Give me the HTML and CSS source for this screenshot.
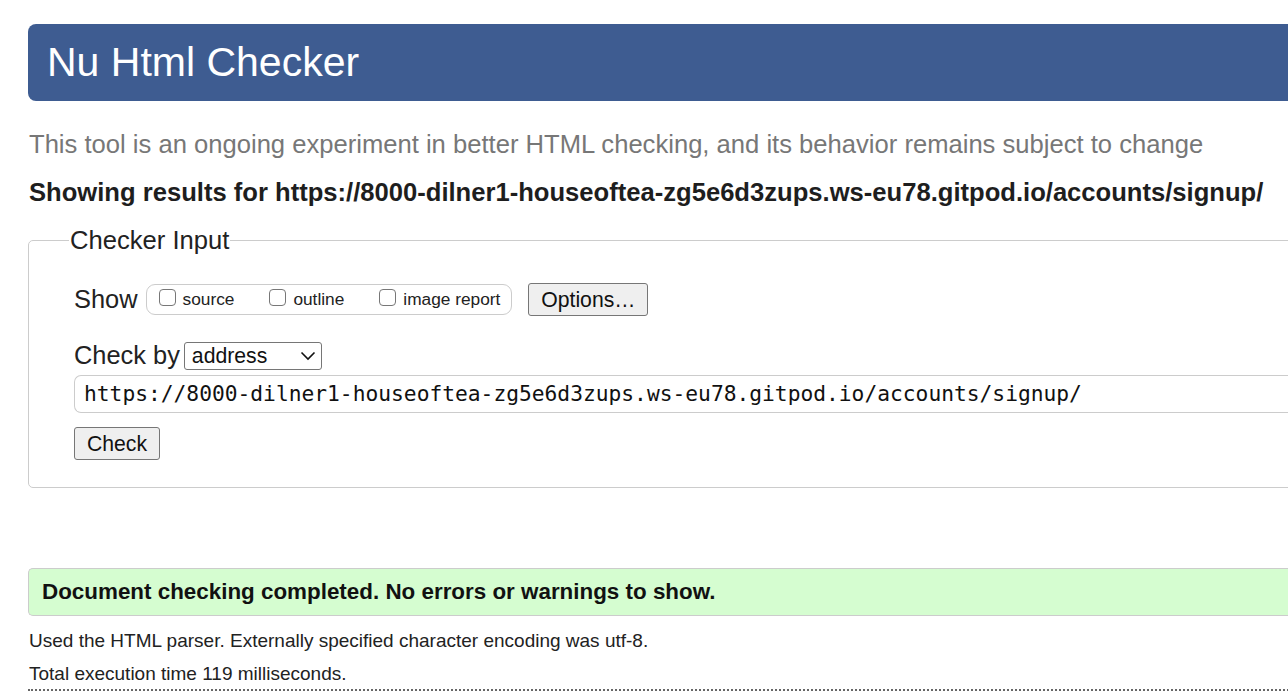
FILE: index.html
```html
<!DOCTYPE html>
<html lang="en">
<head>
<meta charset="utf-8">
<title>Nu Html Checker</title>
<link rel="stylesheet" href="styles.css">
</head>
<body>
<div class="page">
  <h1 class="banner">Nu Html Checker</h1>
  <p class="tagline">This tool is an ongoing experiment in better HTML checking, and its behavior remains subject to change</p>
  <p class="showing">Showing results for https://8000-dilner1-houseoftea-zg5e6d3zups.ws-eu78.gitpod.io/accounts/signup/</p>
  <fieldset class="input-box">
    <legend class="legend">Checker Input</legend>
    <div class="inner">
      <div class="row show-row">
        <span class="row-label">Show</span>
        <span class="opts">
          <label class="opt"><span class="cb"></span>source</label>
          <label class="opt"><span class="cb"></span>outline</label>
          <label class="opt"><span class="cb"></span>image report</label>
        </span>
        <span class="btn options-btn">Options…</span>
      </div>
      <div class="row checkby-row">
        <span class="row-label">Check by</span>
        <span class="select">address
          <svg class="chev" width="16" height="10" viewBox="0 0 16 10"><path d="M1.5 1.5 L8 8 L14.5 1.5" fill="none" stroke="#111" stroke-width="1.6"/></svg>
        </span>
      </div>
      <div class="url">https://8000-dilner1-houseoftea-zg5e6d3zups.ws-eu78.gitpod.io/accounts/signup/</div>
      <div class="row"><span class="btn check-btn">Check</span></div>
    </div>
  </fieldset>
  <div class="success">Document checking completed. No errors or warnings to show.</div>
  <p class="meta">Used the HTML parser. Externally specified character encoding was utf-8.</p>
  <p class="meta">Total execution time 119 milliseconds.</p>
  <div class="dotted"></div>
</div>
</body>
</html>
```
FILE: styles.css
```css
html, body {
  margin: 0;
  padding: 0;
  overflow: hidden;
  background: #fff;
}
body {
  font-family: "Liberation Sans", Arial, sans-serif;
  color: #222;
}
.page {
  width: 1320px;
  padding: 24px 0 0 28px;
}
.banner {
  margin: 0;
  height: 77px;
  box-sizing: border-box;
  background: #3e5c91;
  color: #fff;
  font-weight: normal;
  font-size: 41px;
  line-height: 77px;
  padding-left: 19px;
  border-radius: 8px 0 0 8px;
}
.tagline {
  margin: 28px 0 0 1px;
  color: #777;
  font-size: 25.6px;
  line-height: 30px;
}
.showing {
  margin: 18px 0 0 1px;
  font-weight: bold;
  font-size: 25.6px;
  line-height: 30px;
  color: #1e1e1e;
}
.input-box {
  margin: 19px 0 0 0;
  border: 1px solid #ccc;
  border-radius: 5px;
  padding: 0;
  min-width: 0;
}
.legend {
  font-size: 25.6px;
  padding: 0 1px;
  margin-left: 40px;
  color: #222;
  line-height: 28px;
}
.inner {
  padding: 0 0 27px 45px;
}
.row {
  display: flex;
  align-items: center;
}
.row-label {
  font-size: 25.4px;
  margin-right: 8px;
}
.show-row {
  margin-top: 29px;
}
.opts {
  display: inline-flex;
  align-items: center;
  height: 31px;
  box-sizing: border-box;
  border: 1px solid #ccc;
  border-radius: 9px;
  padding: 0 11px 0 12px;
  gap: 35px;
}
.opt {
  display: inline-flex;
  align-items: center;
  font-size: 17.3px;
  color: #222;
}
.cb {
  width: 17px;
  height: 17px;
  border: 1px solid #777;
  border-radius: 4px;
  box-sizing: border-box;
  margin-right: 7px;
  margin-top: -5px;
}
.btn {
  display: inline-flex;
  align-items: center;
  justify-content: center;
  box-sizing: border-box;
  border: 1px solid #767676;
  border-radius: 3px;
  background: #efefef;
  font-size: 21.2px;
  color: #111;
}
.options-btn {
  margin-left: 16px;
  width: 120px;
  height: 33px;
}
.checkby-row {
  margin-top: 25px;
}
.checkby-row .row-label {
  margin-right: 4px;
}
.select {
  display: inline-flex;
  align-items: center;
  justify-content: space-between;
  width: 138px;
  height: 28px;
  box-sizing: border-box;
  border: 1px solid #767676;
  border-radius: 3px;
  padding: 0 5px 0 7px;
  font-size: 21.2px;
  color: #111;
}
.url {
  margin-top: 5px;
  height: 38px;
  box-sizing: border-box;
  border: 1px solid #ccc;
  border-right: none;
  border-radius: 7px 0 0 7px;
  font-family: "DejaVu Sans Mono", "Liberation Mono", monospace;
  font-size: 21.25px;
  line-height: 36px;
  padding-left: 9px;
  color: #111;
}
.check-btn {
  margin-top: 14px;
  width: 86px;
  height: 33px;
}
.success {
  margin-top: 80px;
  height: 48px;
  box-sizing: border-box;
  background: #d5fdd0;
  border: 1px solid #ccc;
  border-right: none;
  border-radius: 5px 0 0 5px;
  font-weight: bold;
  font-size: 22.4px;
  line-height: 46px;
  padding-left: 13px;
  color: #111;
}
.meta {
  margin: 14px 0 0 1px;
  font-size: 19px;
  line-height: 22px;
  color: #222;
}
.meta + .meta {
  margin-top: 11px;
}
.dotted {
  margin-top: 4px;
  border-top: 2px dotted #666;
}
```
